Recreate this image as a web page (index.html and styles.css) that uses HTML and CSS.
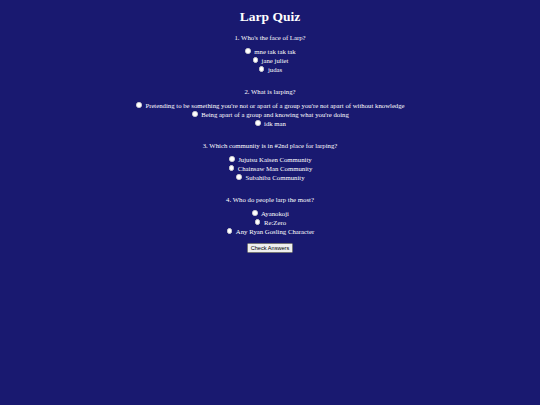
FILE: index.html
```html
<!DOCTYPE html>
<html>
<head>
<meta charset="utf-8">
<title>Larp Quiz</title>
<link rel="stylesheet" href="styles.css">
</head>
<body>
<main class="quiz">
  <h1 class="title">Larp Quiz</h1>
  <section class="question first">
    <p class="prompt">1. Who's the face of Larp?</p>
    <label class="option"><input type="radio" name="q1"><span>mne tak tak tak</span></label>
    <label class="option"><input type="radio" name="q1"><span>jane juliet</span></label>
    <label class="option"><input type="radio" name="q1"><span>judas</span></label>
  </section>
  <section class="question">
    <p class="prompt">2. What is larping?</p>
    <label class="option"><input type="radio" name="q2"><span>Pretending to be something you're not or apart of a group you're not apart of without knowledge</span></label>
    <label class="option"><input type="radio" name="q2"><span>Being apart of a group and knowing what you're doing</span></label>
    <label class="option"><input type="radio" name="q2"><span>idk man</span></label>
  </section>
  <section class="question">
    <p class="prompt">3. Which community is in #2nd place for larping?</p>
    <label class="option"><input type="radio" name="q3"><span>Jujutsu Kaisen Community</span></label>
    <label class="option"><input type="radio" name="q3"><span>Chainsaw Man Community</span></label>
    <label class="option"><input type="radio" name="q3"><span>Subahiba Community</span></label>
  </section>
  <section class="question">
    <p class="prompt">4. Who do people larp the most?</p>
    <label class="option"><input type="radio" name="q4"><span>Ayanokoji</span></label>
    <label class="option"><input type="radio" name="q4"><span>Re:Zero</span></label>
    <label class="option"><input type="radio" name="q4"><span>Any Ryan Gosling Character</span></label>
  </section>
  <div class="actions"><button class="check" type="button">Check Answers</button></div>
</main>
</body>
</html>
```
FILE: styles.css
```css
html, body {
  margin: 0;
  padding: 0;
  background: #191970;
}
body {
  width: 540px;
  height: 405px;
  color: #ffffff;
  font-family: "Liberation Serif", "Times New Roman", serif;
  font-size: 6.75px;
  line-height: 9px;
}
.quiz {
  display: flex;
  flex-direction: column;
  align-items: center;
  text-align: center;
}
.title {
  margin: 8px 0 0;
  font-size: 13.5px;
  line-height: 18px;
  font-weight: bold;
}
.question {
  display: flex;
  flex-direction: column;
  align-items: center;
  margin-top: 13px;
}
.question.first {
  margin-top: 6.5px;
}
.prompt {
  margin: 0 0 5px;
}
.option {
  display: flex;
  align-items: center;
  height: 9px;
  white-space: nowrap;
}
.option input {
  -webkit-appearance: none;
  appearance: none;
  width: 5.5px;
  height: 5.5px;
  margin: 0 3.5px 0 1px;
  border-radius: 50%;
  background: #ffffff;
  border: 0.5px solid #d8d8d8;
  box-sizing: border-box;
}
.actions {
  margin-top: 7px;
}
.check {
  font-family: "Liberation Sans", Arial, sans-serif;
  font-size: 5.6px;
  line-height: 6.5px;
  padding: 1px 2.5px;
  color: #000;
  background: #efefef;
  border: 0.5px solid #767676;
  border-radius: 1.5px;
}
```
